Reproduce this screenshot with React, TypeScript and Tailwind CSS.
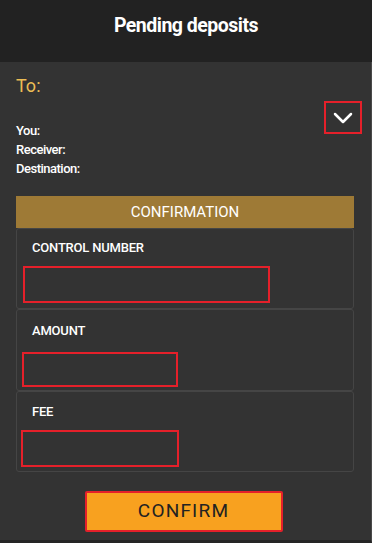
import React from 'react';

function Chevron() {
    return (
        <svg width="20" height="12" viewBox="0 0 20 12" fill="none">
            <path d="M2 2l8 8 8-8" stroke="white" strokeWidth="2.5" strokeLinecap="round" strokeLinejoin="round" />
        </svg>
    );
}

export default function App() {
    return (
        <div className="w-[372px] h-[543px] bg-[#333333] flex flex-col" style={{ fontFamily: 'Roboto, "Liberation Sans", sans-serif' }}>
            {/* Header */}
            <div className="h-[62px] bg-[#222222] flex items-start justify-center pt-[11px] shrink-0">
                <h1 className="text-[19.5px] font-bold text-white tracking-[-0.5px]">Pending deposits</h1>
            </div>

            <div className="flex-1 border-r border-[#4a4a4a] border-b-[3px] border-b-[#252525] px-4 relative">
                <div className="pt-[15px] text-[18px] text-[#ebbd55] leading-none">To:</div>

                <button className="absolute right-[9px] top-[39px] w-[38px] h-[33px] border-2 border-[#e5202a] flex items-center justify-center">
                    <Chevron />
                </button>

                <div className="mt-[26px] flex flex-col text-[13px] font-medium text-white leading-[19px] tracking-[-0.5px]">
                    <div>You:</div>
                    <div>Receiver:</div>
                    <div>Destination:</div>
                </div>

                {/* Confirmation panel */}
                <div className="mt-[18px] w-[338px]">
                    <div className="h-[32px] bg-[#9e7a36] flex items-center justify-center text-[15px] text-white">
                        CONFIRMATION
                    </div>
                    <div className="border border-[#454545] rounded-[3px] h-[81px]">
                        <div className="pt-[12px] pl-[15px] text-[13px] font-medium text-white leading-none tracking-[-0.2px]">CONTROL NUMBER</div>
                        <div className="w-[247px] h-[37px] border-2 border-[#e5202a] ml-[6px] mt-[12px]" />
                    </div>
                    <div className="border border-[#454545] rounded-[3px] h-[82px]">
                        <div className="pt-[14px] pl-[15px] text-[13px] font-medium text-white leading-none tracking-[-0.2px]">AMOUNT</div>
                        <div className="w-[156px] h-[35px] border-2 border-[#e5202a] ml-[5px] mt-[15px]" />
                    </div>
                    <div className="border border-[#454545] rounded-[3px] h-[81px]">
                        <div className="pt-[13px] pl-[15px] text-[13px] font-medium text-white leading-none tracking-[-0.2px]">FEE</div>
                        <div className="w-[158px] h-[37px] border-2 border-[#e5202a] ml-[4px] mt-[12px]" />
                    </div>
                </div>

                <div className="flex justify-center mt-[19px] pr-[4px]">
                    <button className="w-[198px] h-[41px] border-2 border-[#e5202a] bg-[#f8a11f] rounded-[2px] text-[19px] text-[#222222] font-normal tracking-[1.2px]">
                        CONFIRM
                    </button>
                </div>
            </div>
        </div>
    );
}
